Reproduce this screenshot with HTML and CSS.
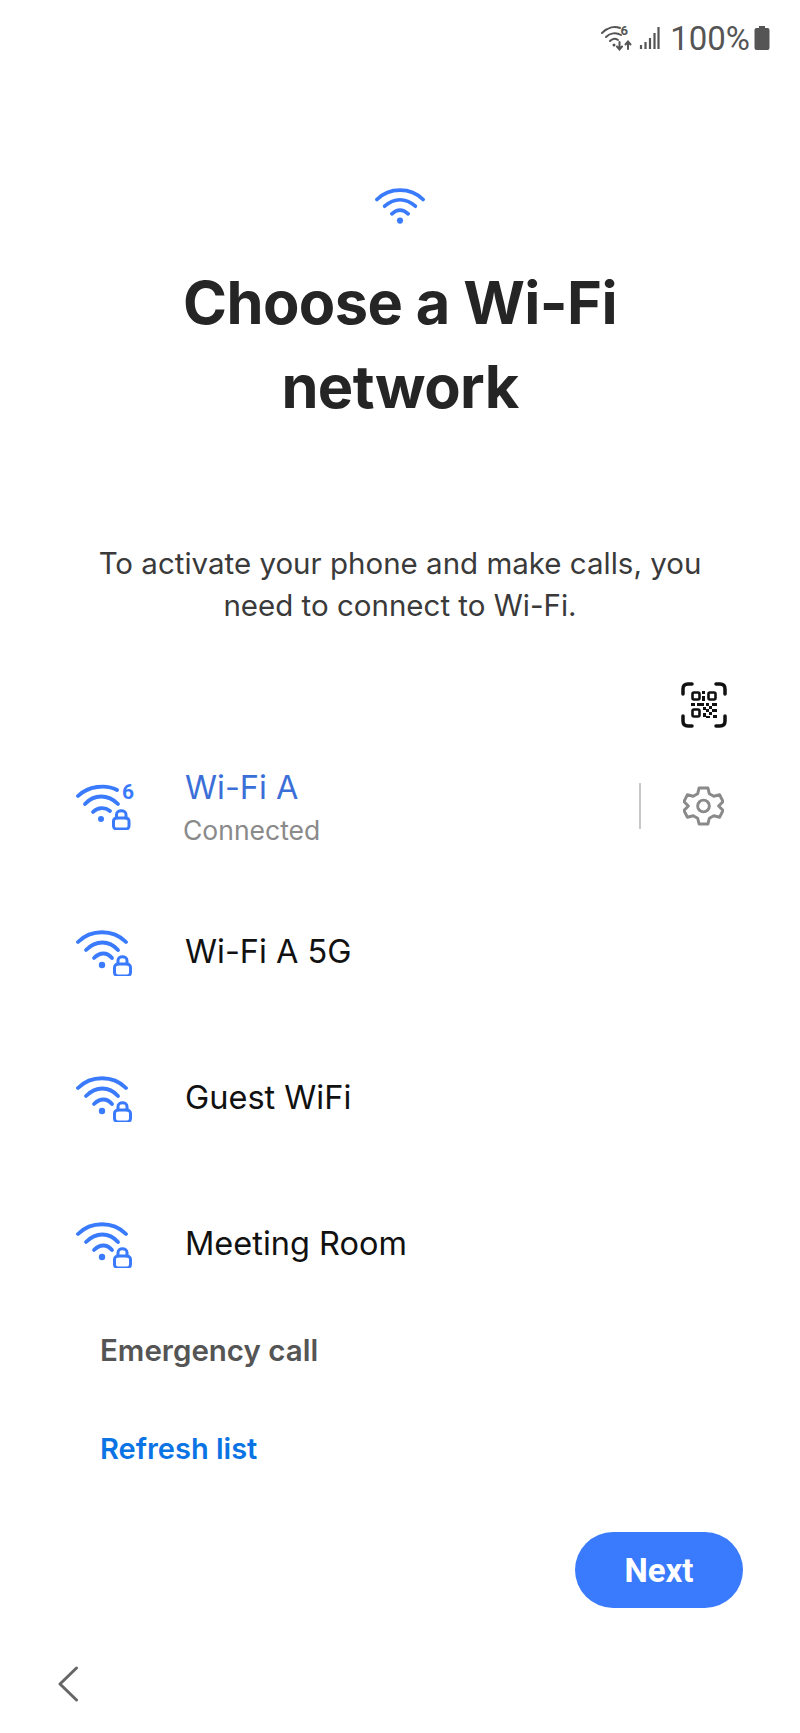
FILE: index.html
```html
<!DOCTYPE html>
<html lang="en">
<head>
<meta charset="utf-8">
<title>Choose a Wi-Fi network</title>
<link rel="stylesheet" href="styles.css">
</head>
<body>
<svg class="defs" width="0" height="0" aria-hidden="true">
  <defs>
    <g id="wifi-lock" fill="none" stroke="#3a7bfd" stroke-width="3.800" stroke-linecap="round" stroke-linejoin="round">
      <path d="M2 14C15 1 37 1 50 14"/>
      <path d="M10 22C20 12 33 12 42 22"/>
      <path d="M18 30C24 24 31 24 36 30"/>
      <circle cx="26" cy="37" r="3.200" fill="#3a7bfd" stroke="none"/>
      <rect x="38.500" y="36" width="16" height="12" rx="3.500" fill="#fff" stroke-width="3"/>
      <path d="M42 36V32.500C42 27.500 51 27.500 51 32.500V36" stroke-width="3"/>
    </g>
  </defs>
</svg>
<div class="screen">
  <header class="status">
    <svg class="st-wifi" width="32" height="26" viewBox="0 0 32 26" fill="none" stroke="#555" stroke-width="2" stroke-linecap="round">
      <path d="M1 8C7 2 14 1 19 3"/>
      <path d="M5 12C9 8 15 7 20 10"/>
      <path d="M9 16C11 14 14 13 17 15"/>
      <circle cx="13" cy="20" r="1.500" fill="#555" stroke="none"/>
      <path d="M18.500 17V24M16 21.500L18.500 24.500L21 21.500"/>
      <path d="M27 24V17M24.500 19.500L27 16.500L29.500 19.500"/>
    </svg>
    <span class="st-six">6</span>
    <svg class="st-signal" width="21" height="26" viewBox="0 0 21 26" fill="none" stroke="#555" stroke-width="2.200">
      <path d="M2 24V20M6.500 24V17M11 24V13M15.500 24V8M19.500 24V2"/>
    </svg>
    <span class="st-pct">100%</span>
    <svg class="st-batt" width="16" height="26" viewBox="0 0 16 26">
      <path d="M5 1H11V3H13.500Q15.500 3 15.500 5V23Q15.500 25 13.500 25H2.500Q.5 25 .5 23V5Q.5 3 2.500 3H5Z" fill="#555"/>
    </svg>
  </header>

  <main class="main">
    <svg class="hero-icon" width="50" height="40" viewBox="0 0 52 41.600" fill="none" stroke="#3a7bfd" stroke-width="3.800" stroke-linecap="round">
      <path d="M2 14C15 1 37 1 50 14"/>
      <path d="M10 21C20 12 32 12 42 21"/>
      <path d="M17.500 29C23 24 29 24 34.500 29"/>
      <circle cx="26" cy="36" r="3.200" fill="#3a7bfd" stroke="none"/>
    </svg>
    <h1 class="title">Choose a Wi-Fi<br>network</h1>
    <p class="intro">To activate your phone and make calls, you<br>need to connect to Wi-Fi.</p>

    <div class="qr-row">
      <svg class="qr" width="46" height="46" viewBox="0 0 46 46" fill="none" stroke="#111" stroke-width="3.500" stroke-linecap="round">
        <path d="M2 12V7Q2 2 7 2H11M35 2H39Q44 2 44 7V12M2 34V39Q2 44 7 44H11M35 44H39Q44 44 44 39V34"/>
        <g stroke-width="2.600">
          <rect x="11.500" y="10.500" width="7" height="7" rx="1.500"/>
          <rect x="27.500" y="10.500" width="7" height="7" rx="1.500"/>
          <rect x="11.500" y="27.500" width="7" height="7" rx="1.500"/>
        </g>
        <g fill="#111" stroke="none">
          <rect x="21" y="9" width="3" height="3"/>
          <rect x="21" y="14" width="3" height="5"/>
          <rect x="10" y="21" width="4" height="3"/>
          <rect x="16" y="21" width="7" height="3"/>
          <rect x="25" y="21" width="3" height="3"/>
          <rect x="31" y="21" width="5" height="3"/>
          <rect x="22" y="25" width="3" height="3"/>
          <rect x="28" y="24" width="3" height="3"/>
          <rect x="25" y="27" width="3" height="3"/>
          <rect x="31" y="27" width="5" height="3"/>
          <rect x="28" y="30" width="3" height="3"/>
          <rect x="22" y="31" width="3" height="4"/>
          <rect x="32" y="33" width="4" height="3"/>
          <rect x="25" y="34" width="4" height="2"/>
        </g>
      </svg>
    </div>

    <ul class="networks">
      <li class="net net-active">
        <span class="net-icon">
          <svg width="56" height="48" viewBox="0 0 56 48" fill="none" stroke="#3a7bfd" stroke-width="3.800" stroke-linecap="round" stroke-linejoin="round">
            <path d="M2 14C12 4 30 2 41 8"/>
            <path d="M9 22C18 12 32 12 42 22"/>
            <path d="M17 30C22 25 29 25 34 29"/>
            <circle cx="25" cy="37" r="3" fill="#3a7bfd" stroke="none"/>
            <rect x="37.500" y="36" width="15.500" height="11" rx="3" fill="#fff" stroke-width="3"/>
            <path d="M40.500 36V32.500C40.500 27.500 50 27.500 50 32.500V36" stroke-width="3"/>
          </svg>
          <span class="six">6</span>
        </span>
        <span class="net-text">
          <span class="net-name net-name-on">Wi-Fi A</span>
          <span class="net-sub">Connected</span>
        </span>
        <span class="net-divider"></span>
        <svg class="gear" width="41" height="42" viewBox="0 0 42 42" fill="none" stroke="#8a8a8a" stroke-width="3" stroke-linejoin="round">
          <path d="M16.500 2.500H25.500L27 8.500L31.500 11L37.500 9.500L41 16.500L36.500 21L41 25.500L37.500 32.500L31.500 31L27 33.500L25.500 39.500H16.500L15 33.500L10.500 31L4.500 32.500L1 25.500L5.500 21L1 16.500L4.500 9.500L10.500 11L15 8.500Z"/>
          <circle cx="21" cy="21" r="6"/>
        </svg>
      </li>
      <li class="net">
        <svg class="net-icon" width="56" height="48" viewBox="0 0 56 48"><use href="#wifi-lock"/></svg>
        <span class="net-name">Wi-Fi A 5G</span>
      </li>
      <li class="net">
        <svg class="net-icon" width="56" height="48" viewBox="0 0 56 48"><use href="#wifi-lock"/></svg>
        <span class="net-name">Guest WiFi</span>
      </li>
      <li class="net">
        <svg class="net-icon" width="56" height="48" viewBox="0 0 56 48"><use href="#wifi-lock"/></svg>
        <span class="net-name">Meeting Room</span>
      </li>
    </ul>

    <div class="links">
      <a class="link link-dark">Emergency call</a>
      <a class="link link-blue">Refresh list</a>
    </div>

    <div class="actions">
      <button class="next" type="button">Next</button>
    </div>
  </main>

  <footer class="nav">
    <svg width="22" height="36" viewBox="0 0 22 36" fill="none" stroke="#666" stroke-width="3" stroke-linecap="round" stroke-linejoin="round">
      <path d="M19.500 2L3 18L19.500 34"/>
    </svg>
  </footer>
</div>
</body>
</html>
```

FILE: styles.css
```css
* { box-sizing: border-box; }
html, body { margin: 0; padding: 0; background: #fff; }
body { font-family: Inter, Roboto, sans-serif; color: #111; }
.defs { position: absolute; }
.screen { width: 800px; height: 1733px; display: flex; flex-direction: column; overflow: hidden; }

.status { height: 76px; padding: 0 30px 0 0; display: flex; align-items: center; justify-content: flex-end; color: #555; position: relative; }
.st-wifi { margin-right: 6px; }
.st-six { position: absolute; right: 172px; top: 24px; font: 700 13px/1 Roboto, sans-serif; }
.st-signal { margin-right: 10px; }
.st-pct { font: 400 33px/1 Roboto, sans-serif; margin-right: 4px; }

.main { display: flex; flex-direction: column; align-items: center; padding-top: 110px; }
.hero-icon { display: block; }
.title { margin: 34px 0 0; font: 700 59.500px/84px Inter, Roboto, sans-serif; letter-spacing: -0.6px; color: #252525; text-align: center; }
.intro { margin: 114px 0 0; font: 400 29.500px/42px Inter, Roboto, sans-serif; color: #3a3a3a; text-align: center; }

.qr-row { align-self: stretch; display: flex; justify-content: flex-end; padding: 56px 73px 0 0; }
.qr { display: block; }

.networks { align-self: stretch; list-style: none; margin: 5px 0 0; padding: 0; }
.net { height: 146px; padding-left: 76px; display: flex; align-items: center; position: relative; }
.net-icon { position: relative; display: block; flex: none; width: 56px; height: 48px; margin-right: 53px; }
.net-icon svg { display: block; }
.six { position: absolute; left: 46px; top: 0; font: 700 21px/1 Roboto, sans-serif; color: #3a7bfd; }
.net-text { display: flex; flex-direction: column; flex: 1; }
.net-name { font: 400 32.500px/44px Inter, Roboto, sans-serif; color: #111; }
.net-name-on { color: #3b6fd8; }
.net-sub { margin-top: 3px; margin-left: -2px; font: 400 26.500px/34px Inter, Roboto, sans-serif; color: #8a8a8a; }
.net-divider { width: 2px; height: 46px; background: #c9c9c9; margin-right: 42px; }
.gear { margin-right: 76px; display: block; }

.links { align-self: stretch; display: flex; flex-direction: column; gap: 33px; padding-left: 100px; }
.link { display: block; font: 600 29.500px/66px Inter, Roboto, sans-serif; }
.link-blue { color: #0b74e5; font-size: 29px; }
.link-dark { color: #555; }

.actions { align-self: stretch; display: flex; justify-content: flex-end; padding: 50px 57px 0 0; }
.next { width: 168px; height: 76px; border: 0; border-radius: 38px; background: #3a7bfd; color: #fff; font: 700 33px/1 Roboto, sans-serif; }

.nav { margin-top: 58px; padding-left: 57px; }
.nav svg { display: block; }
```
